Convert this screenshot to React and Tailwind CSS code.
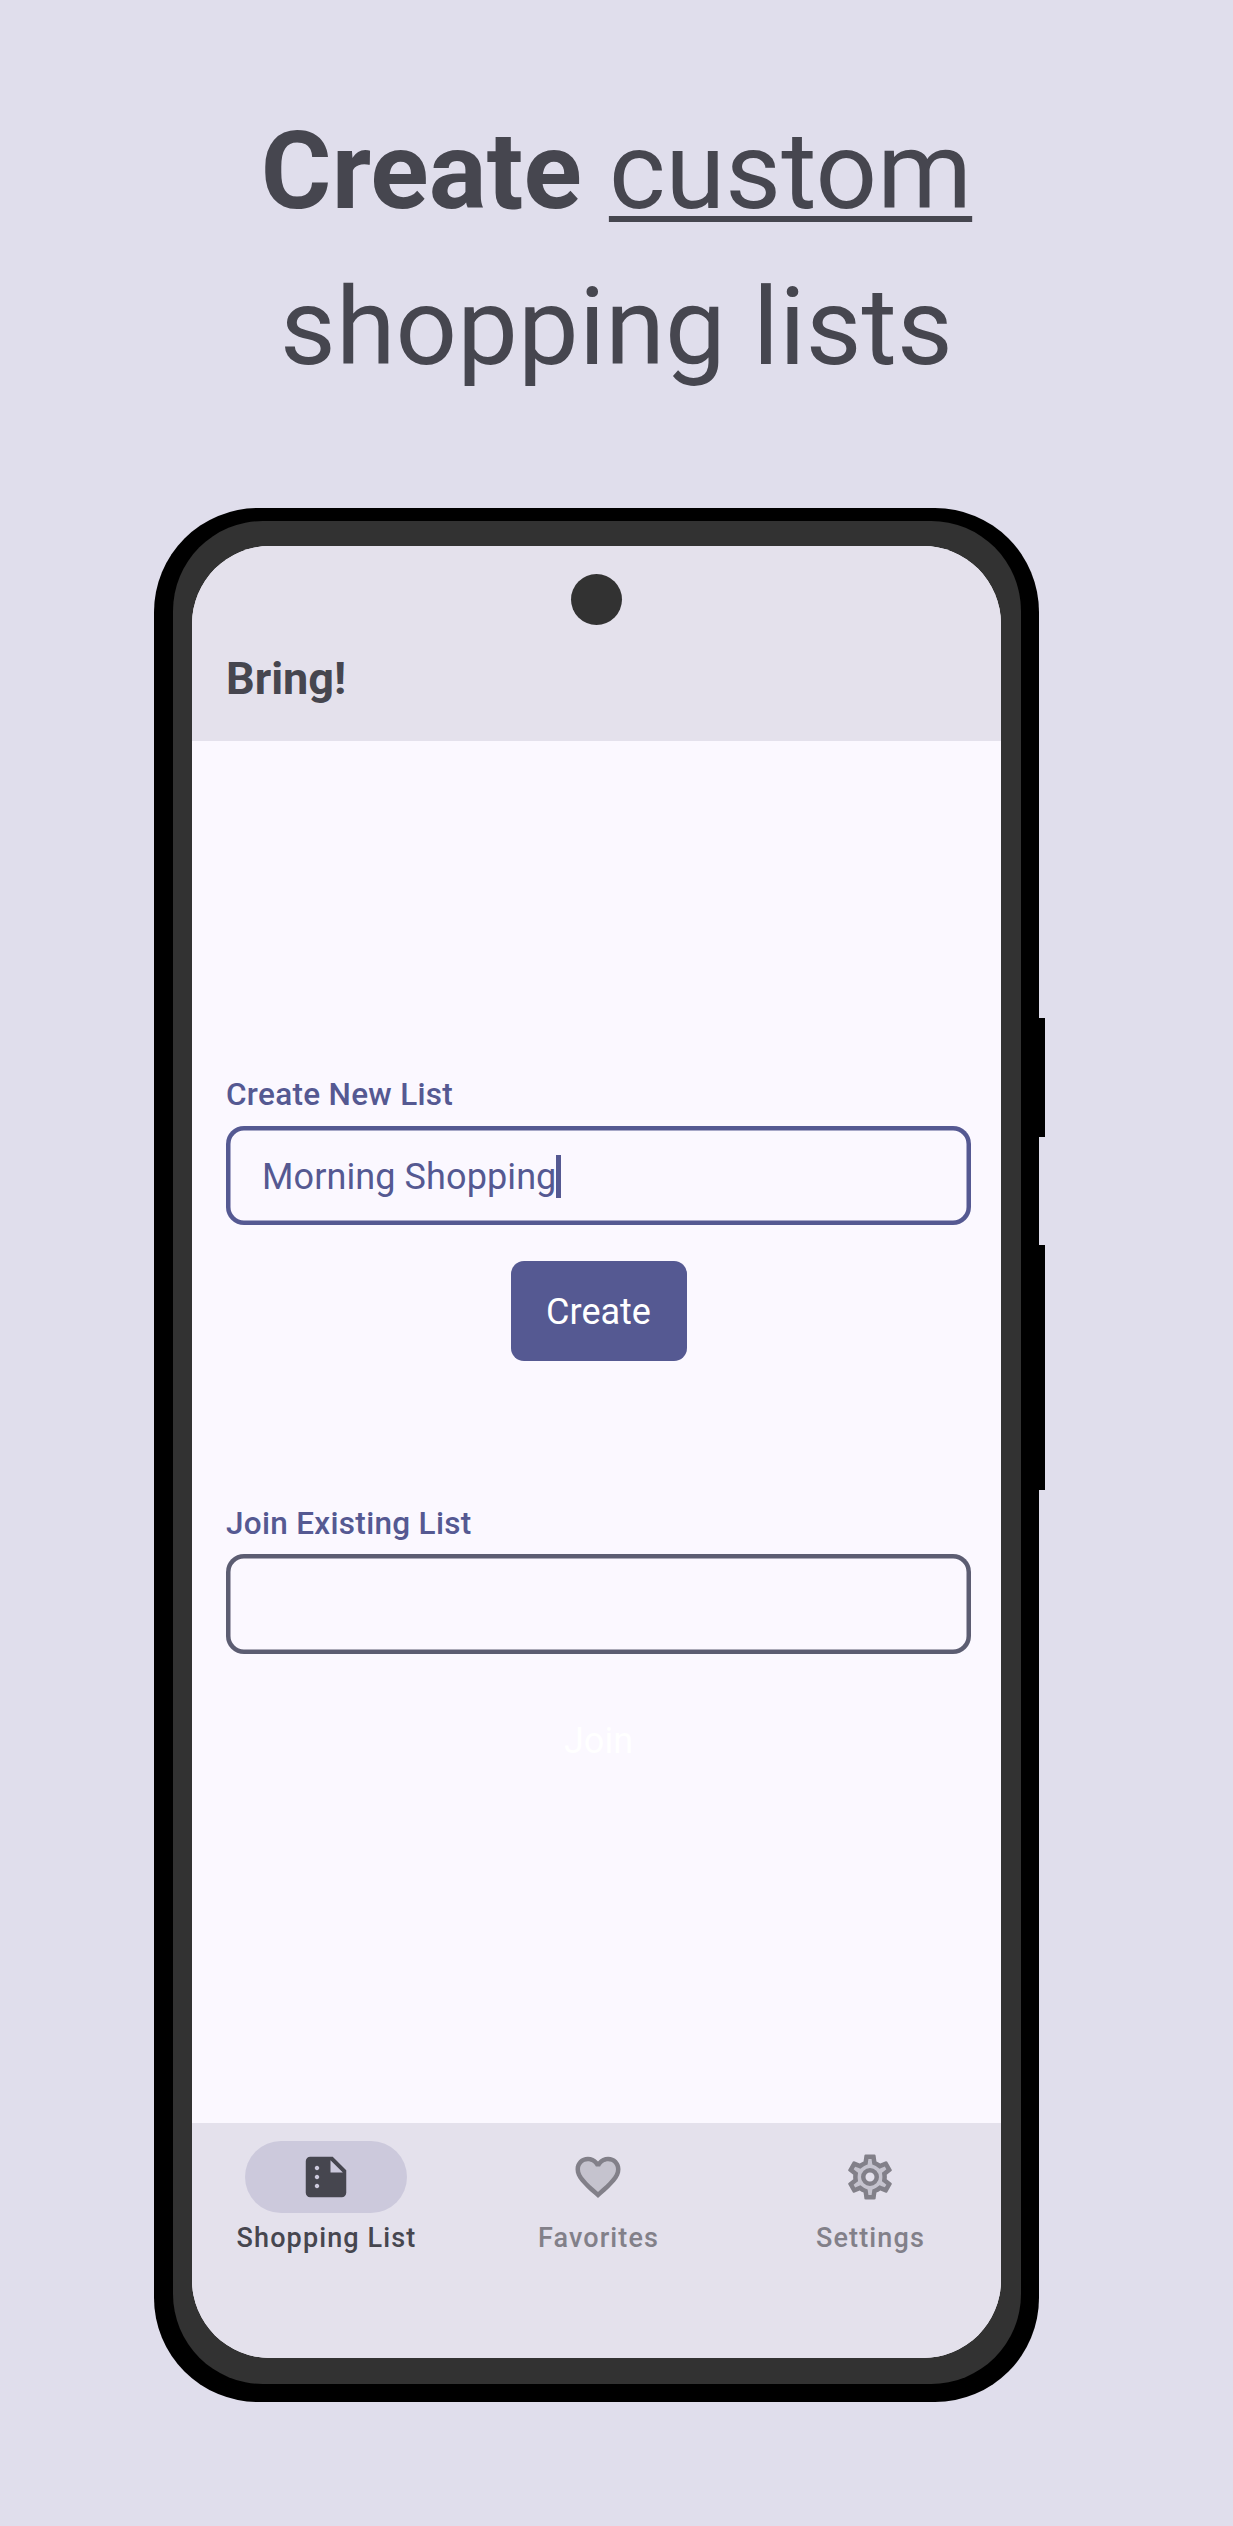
import React from "react";

function SummaryIcon() {
  return (
    <svg viewBox="0 0 24 24" className="size-[54px]" fill="currentColor">
      <path
        fillRule="evenodd"
        d="M15 3H5c-1.1 0-1.99.9-1.99 2L3 19c0 1.1.89 2 1.99 2H19c1.1 0 2-.9 2-2V9l-6-6zM8 17c-.55 0-1-.45-1-1s.45-1 1-1 1 .45 1 1-.45 1-1 1zm0-4c-.55 0-1-.45-1-1s.45-1 1-1 1 .45 1 1-.45 1-1 1zm0-4c-.55 0-1-.45-1-1s.45-1 1-1 1 .45 1 1-.45 1-1 1zm6 1V4.5l5.5 5.5H14z"
      />
    </svg>
  );
}

function HeartIcon() {
  return (
    <svg viewBox="0 0 24 24" className="size-[54px]">
      <path fill="#c5c3ce" d="M12 20l-7-7-2-5 2-3 4-1 3 3 3-3 4 1 2 3-2 5z" />
      <path
        fill="#828089"
        d="M16.5 3c-1.74 0-3.41.81-4.5 2.09C10.91 3.81 9.24 3 7.5 3 4.42 3 2 5.42 2 8.5c0 3.78 3.4 6.86 8.55 11.54L12 21.35l1.45-1.32C18.6 15.36 22 12.28 22 8.5 22 5.42 19.58 3 16.5 3zm-4.4 15.55l-.1.1-.1-.1C7.14 14.24 4 11.39 4 8.5 4 6.5 5.5 5 7.5 5c1.54 0 3.04.99 3.57 2.36h1.87C13.46 5.99 14.96 5 16.5 5c2 0 3.5 1.5 3.5 3.5 0 2.89-3.14 5.74-7.9 10.05z"
      />
    </svg>
  );
}

const GEAR_INNER =
  "M17.45 11.27c.04.31.05.52.05.73 0 .21-.02.43-.05.73l-.14 1.13.89.7 1.08.84-.7 1.21-1.27-.51-1.04-.42-.9.68c-.43.32-.84.56-1.25.73l-1.06.43-.16 1.13-.2 1.35h-1.4l-.19-1.35-.16-1.13-1.06-.43c-.43-.18-.83-.41-1.23-.71l-.91-.7-1.06.43-1.27.51-.7-1.21 1.08-.84.89-.7-.14-1.13c-.03-.31-.05-.54-.05-.74s.02-.43.05-.73l.14-1.13-.89-.7-1.08-.84.7-1.21 1.27.51 1.04.42.9-.68c.43-.32.84-.56 1.25-.73l1.06-.43.16-1.13.2-1.35h1.39l.19 1.35.16 1.13 1.06.43c.43.18.83.41 1.23.71l.91.7 1.06-.43 1.27-.51.7 1.21-1.07.85-.89.7.14 1.13z";

const GEAR_OUTER =
  "M19.43 12.98c.04-.32.07-.64.07-.98 0-.34-.03-.66-.07-.98l2.11-1.65c.19-.15.24-.42.12-.64l-2-3.46c-.09-.16-.26-.25-.44-.25-.06 0-.12.01-.17.03l-2.49 1c-.52-.4-1.08-.73-1.69-.98l-.38-2.65C14.46 2.18 14.25 2 14 2h-4c-.25 0-.46.18-.49.42l-.38 2.65c-.61.25-1.17.59-1.69.98l-2.49-1c-.06-.02-.12-.03-.18-.03-.17 0-.34.09-.43.25l-2 3.46c-.13.22-.07.49.12.64l2.11 1.65c-.04.32-.07.65-.07.98 0 .33.03.66.07.98l-2.11 1.65c-.19.15-.24.42-.12.64l2 3.46c.09.16.26.25.44.25.06 0 .12-.01.17-.03l2.49-1c.52.4 1.08.73 1.69.98l.38 2.65c.03.24.24.42.49.42h4c.25 0 .46-.18.49-.42l.38-2.65c.61-.25 1.17-.59 1.69-.98l2.49 1c.06.02.12.03.18.03.17 0 .34-.09.43-.25l2-3.46c.12-.22.07-.49-.12-.64l-2.11-1.65z";

function GearIcon() {
  return (
    <svg viewBox="0 0 24 24" className="size-[54px]">
      <path d={GEAR_OUTER} fill="#828089" />
      <path d={GEAR_INNER} fill="#c5c3ce" />
      <circle cx="12" cy="12" r="3" fill="#e4e1ec" stroke="#828089" strokeWidth="2" />
    </svg>
  );
}

function NavItem({ label, active, children }) {
  return (
    <div
      className={
        active
          ? "flex flex-col items-center text-[#46464f]"
          : "flex flex-col items-center text-[#828089]"
      }
    >
      <div
        className={
          active
            ? "flex h-[72px] w-[162px] items-center justify-center rounded-full bg-[#ccc9dc]"
            : "flex h-[72px] w-[162px] items-center justify-center"
        }
      >
        {children}
      </div>
      <span className="mt-[7px] pl-[1px] text-[27px] leading-[36px] font-medium tracking-[1.125px] whitespace-nowrap">
        {label}
      </span>
    </div>
  );
}

function FieldLabel({ children }) {
  return (
    <label className="text-[31.5px] leading-[45px] font-medium tracking-[0.3px] text-[#555992]">
      {children}
    </label>
  );
}

export default function App() {
  return (
    <main
      className="flex h-[2526px] w-[1233px] flex-col overflow-hidden bg-[#e0deec]"
      style={{ fontFamily: 'Roboto, "Liberation Sans", sans-serif' }}
    >
      <h1 className="h-[508px] pt-[93px] text-center text-[108px] leading-[156px] tracking-[0.15px] text-[#46464f]">
        <b className="font-bold">Create</b>{" "}
        <span className="underline decoration-[5.5px] underline-offset-[8px]">custom</span>
        <br />
        shopping lists
      </h1>

      <div className="relative ml-[154px] h-[1894px] w-[885px] rounded-[104px] bg-black pt-[13px] pr-[18px] pb-[18px] pl-[19px]">
        <div className="absolute top-[510px] left-[875px] h-[119px] w-[16px] bg-black" />
        <div className="absolute top-[737px] left-[875px] h-[245px] w-[16px] bg-black" />

        <div className="relative h-full rounded-[90px] bg-[#323232] pt-[25px] pr-[20px] pb-[26px] pl-[19px]">
          <div className="relative flex h-full flex-col overflow-hidden rounded-[78px] bg-[#fbf8ff]">
            <div className="absolute top-[28px] left-[379px] size-[51px] rounded-full bg-[#323232]" />

            <header className="h-[195px] shrink-0 bg-[#e4e1ec] pt-[106px] pl-[34px] text-[45px] leading-[54px] font-bold text-[#46464f]">
              Bring!
            </header>

            <section className="flex flex-1 flex-col pt-[331px] pr-[30px] pl-[34px]">
              <FieldLabel>Create New List</FieldLabel>
              <div className="mt-[9px] flex h-[99px] items-center rounded-[18px] pt-[2px] pl-[36px] text-[36px] tracking-[0.1px] text-[#555992] shadow-[inset_0_0_0_4.5px_#555992]">
                <span>Morning Shopping</span>
                <span className="h-[43px] w-[5px] bg-[#555992]" />
              </div>
              <button className="mt-[36px] h-[100px] w-[176px] self-center rounded-[13px] bg-[#555992] pt-[2px] text-[36px] text-white">
                Create
              </button>

              <div className="mt-[140px] flex flex-col">
                <FieldLabel>Join Existing List</FieldLabel>
                <div className="mt-[8px] h-[100px] rounded-[18px] shadow-[inset_0_0_0_4.5px_#5c5d72]" />
                <button className="mt-[37px] h-[100px] w-[140px] self-center text-[36px] text-white">
                  Join
                </button>
              </div>
            </section>

            <nav className="-ml-[2px] grid h-[235px] w-[816px] shrink-0 grid-cols-3 bg-[#e4e1ec] pt-[18px]">
              <NavItem label="Shopping List" active>
                <SummaryIcon />
              </NavItem>
              <NavItem label="Favorites">
                <HeartIcon />
              </NavItem>
              <NavItem label="Settings">
                <GearIcon />
              </NavItem>
            </nav>
          </div>
        </div>
      </div>
    </main>
  );
}
